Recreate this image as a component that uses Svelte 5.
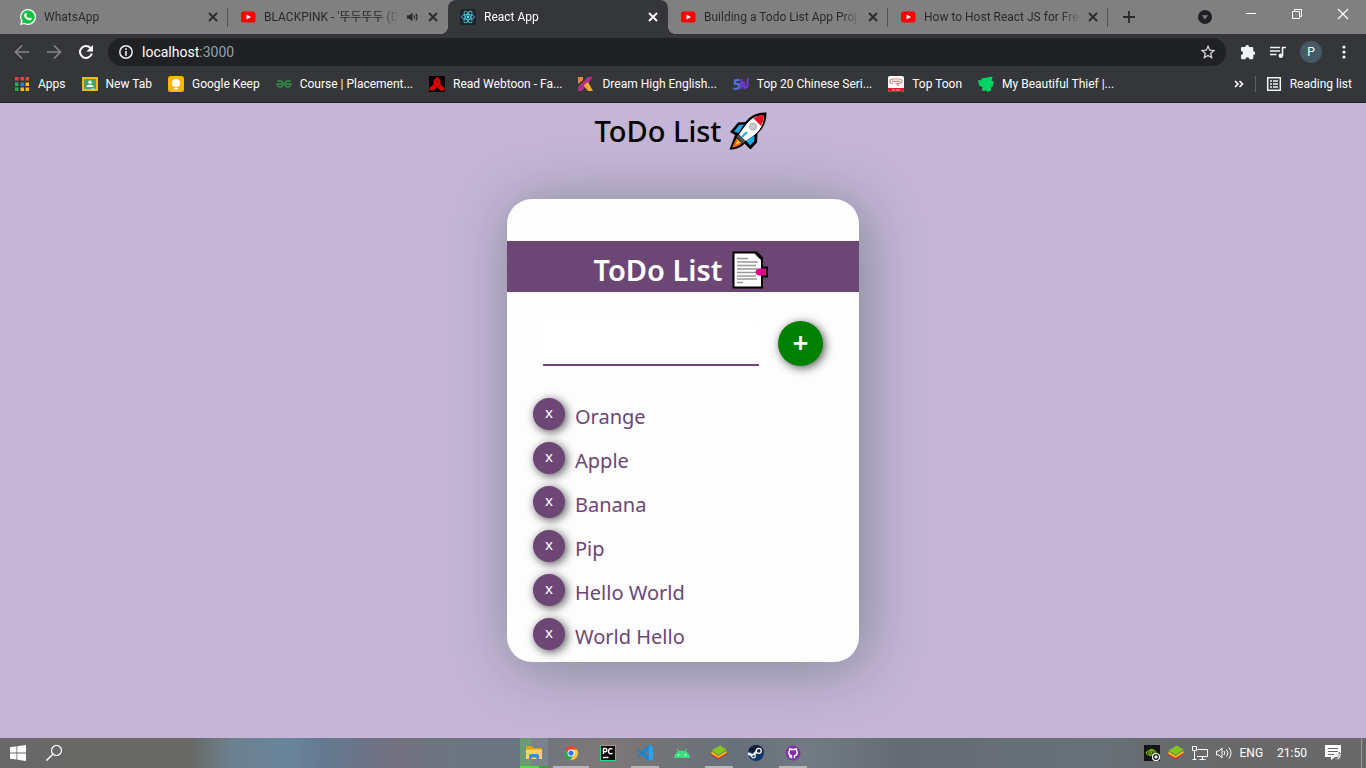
<script>
  let draft = $state('');
  let items = $state(['Orange', 'Apple', 'Banana', 'Pip', 'Hello World', 'World Hello']);

  const tabs = [
    { icon: 'whatsapp', title: 'WhatsApp' },
    { icon: 'youtube', title: "BLACKPINK - '뚜두뚜두 (D", sound: true },
    { icon: 'react', title: 'React App', active: true },
    { icon: 'youtube', title: 'Building a Todo List App Proj' },
    { icon: 'youtube', title: 'How to Host React JS for Free' }
  ];

  const bookmarks = [
    { icon: 'apps', title: 'Apps' },
    { icon: 'classroom', title: 'New Tab' },
    { icon: 'keep', title: 'Google Keep' },
    { icon: 'gfg', title: 'Course | Placement...' },
    { icon: 'webtoon', title: 'Read Webtoon - Fa...' },
    { icon: 'kiss', title: 'Dream High English...' },
    { icon: 'sw', title: 'Top 20 Chinese Seri...' },
    { icon: 'toon', title: 'Top Toon' },
    { icon: 'thief', title: 'My Beautiful Thief |...' }
  ];

  const tasks = [
    { icon: 'explorer', state: 'busy' },
    { icon: 'chrome', state: 'open wide' },
    { icon: 'pycharm', state: '' },
    { icon: 'vscode', state: 'open' },
    { icon: 'android', state: '' },
    { icon: 'stack', state: 'open' },
    { icon: 'steam', state: '' },
    { icon: 'github', state: 'open' }
  ];

  function add(event) {
    event.preventDefault();
    if (draft.trim()) items.push(draft.trim());
    draft = '';
  }
</script>

{#snippet icon(name)}
  <svg class="icon" viewBox="0 0 16 16" aria-hidden="true">
    {#if name === 'whatsapp'}
      <path d="M8 0a8 8 0 0 1 0 16 8 8 0 0 1-3.8-1L0 16l1.1-4.1A8 8 0 0 1 8 0z" fill="#fff" />
      <path d="M8 1.3a6.7 6.7 0 1 1-3.5 12.4l-2.6.7.7-2.5A6.7 6.7 0 0 1 8 1.3z" fill="#10c143" />
      <path d="M5.5 4.2c.6-.3.9 0 1.1.6l.4 1c.1.4-.6.8-.6 1 .4 1.1 1.3 2 2.6 2.5.3 0 .7-.9 1-.8l1.4.7c.6.3.3 1-.1 1.5-1 1-2.5.7-3.7.1-1.7-.8-3.3-2.5-3.6-4-.1-1 .6-2.1 1.5-2.6z" fill="#fff" />
    {:else if name === 'youtube'}
      <rect x="1" y="2.5" width="14.5" height="11" rx="2.5" fill="#f00" />
      <path d="M6.5 5.5v5L11 8z" fill="#fff" />
    {:else if name === 'react'}
      <rect width="16" height="16" rx="2" fill="#20232a" />
      <g fill="none" stroke="#53c1de" stroke-width=".9">
        <ellipse cx="8" cy="8" rx="6.5" ry="2.5" />
        <ellipse cx="8" cy="8" rx="6.5" ry="2.5" transform="rotate(60 8 8)" />
        <ellipse cx="8" cy="8" rx="6.5" ry="2.5" transform="rotate(120 8 8)" />
      </g>
      <circle cx="8" cy="8" r="1.4" fill="#61dafb" />
    {:else if name === 'apps'}
      <path d="M1 1h3.5v3.500H1zM6.500 1H10v3.500H6.500zM11.500 1H15v3.500h-3.500z" fill="#ea4335" />
      <path d="M1 6.500h3.500V10H1zM1 11.500h3.500V15H1z" fill="#34a853" />
      <path d="M6.500 6.500H10V10H6.500z" fill="#1a83f7" />
      <path d="M11.500 6.500H15V10h-3.500zM6.500 11.500H10V15H6.500zM11.500 11.500H15V15h-3.500z" fill="#fbbc05" />
    {:else if name === 'classroom'}
      <rect y="1" width="16" height="14" rx="1" fill="#f4b81c" />
      <rect x="2" y="3" width="12" height="10" fill="#4aa565" />
      <circle cx="8" cy="6.3" r="1.7" fill="#fff" />
      <path d="M4.500 11c0-3 7-3 7 0z" fill="#fff" />
      <path d="M9 12.500h4v1H9z" fill="#ddd" />
    {:else if name === 'keep'}
      <rect width="16" height="16" rx="2.5" fill="#fbb603" />
      <circle cx="8" cy="7" r="4" fill="#fff" />
      <path d="M6 10h4v1H6zM6 12h4v1.500H6z" fill="#fff" />
    {:else if name === 'gfg'}
      <g fill="none" stroke="#2f8d46" stroke-width="1.500">
        <path d="M.5 8h6.800M1.500 5.700C3.500 3.600 7.200 5 7.200 8s-4.500 4.300-5.900 1.500V8" />
        <path d="M15.500 8H8.700M14.500 5.700C12.500 3.600 8.800 5 8.800 8s4.500 4.300 5.900 1.500V8" />
      </g>
    {:else if name === 'webtoon'}
      <path d="M0 0h16v16H0z" fill="#080000" />
      <path d="M8 .5l3.500 4v4L15.500 12v2.500H11l-2-2.500H7l-2 2.500H.5V12l4-3.500v-4z" fill="#e00505" />
      <path d="M5 9l3 3 3-3M8 3v4" fill="none" stroke="#800" stroke-width=".7" />
    {:else if name === 'kiss'}
      <path d="M0 1h5v3L0 8z" fill="#e68a3c" />
      <path d="M10 1h5L4 15H0v-4z" fill="#b52d86" />
      <path d="M7 8l3-2 5 9h-5L6 10z" fill="#f0a733" />
    {:else if name === 'sw'}
      <g fill="none" stroke-width="2.200">
        <path d="M6.300 3.800 2 4.500l-.3 3.200 4.300.5-.5 4.200-5 .8" stroke="#4d72dc" />
        <path d="M8.200 3v9.500L11 5.500l.5 6.500 3-1.500.3-8.500" stroke="#6c38ca" />
      </g>
    {:else if name === 'toon'}
      <rect width="16" height="16" rx="2" fill="#fff" />
      <path d="M0 12h16v2a2 2 0 0 1-2 2H2a2 2 0 0 1-2-2z" fill="#e21b2c" />
      <path d="M5 7.500H4C1 7 1 3 5 3h6c4 0 4 4 0 4.500H8.500L11 10M4 5.300h8" fill="none" stroke="#d98088" stroke-width="1.200" />
      <path d="M4 14h3M8 14h4" stroke="#fff" stroke-width=".6" />
    {:else if name === 'thief'}
      <path d="M3.500 2.500 14.500.5l-.8 4.500 2.300.5-1.500 5.500-1.500.5v3l-3.500 1.500-1-1.500-4.500.5.500-4L1 9.500 0 4l3.500.5z" fill="#00d564" />
    {:else if name === 'explorer'}
      <path d="M0 1h6l1.500 2H15a1 1 0 0 1 1 1v3H0z" fill="#dda014" />
      <path d="M0 4.500h16V14H0z" fill="#ffd35c" />
      <path d="M3 15V11a2 2 0 0 1 2-2h6a2 2 0 0 1 2 2v4h-2.500v-2.500h-5V15z" fill="#2e90e0" />
    {:else if name === 'chrome'}
      <path d="M8 8 1.900 4.500A7 7 0 0 1 14.100 4.500z" fill="#e94335" />
      <path d="M1.900 4.500 5.300 10l3 1L7.500 15A7 7 0 0 1 1.900 4.500z" fill="#31a652" />
      <path d="M8 4.500h6.100A7 7 0 0 1 7.500 15L11 9.500z" fill="#fcc934" />
      <circle cx="8" cy="8" r="3.500" fill="#fff" />
      <circle cx="8" cy="8" r="2.600" fill="#2a75eb" />
    {:else if name === 'pycharm'}
      <path d="M0 0h16v16H0z" fill="#24d78d" />
      <path d="M1 1h14v14H1z" fill="#080808" />
      <path d="M3.500 9V3.500h1.800a1.500 1.500 0 0 1 0 3.200H4M12.500 4.300c-1.500-1.300-4-.8-4 1.900s2.500 3.300 4 1.800M3 12.500h5.500" fill="none" stroke="#fff" stroke-width="1.400" />
    {:else if name === 'vscode'}
      <path d="M11.500 0 16 2v12l-4.500 2L4.500 9.500 1.500 12 0 11l3.300-3L0 5l1.500-1 3 2.500zM11.800 4.500 7 8l4.800 3.500z" fill="#1686d5" />
      <path d="M11.800 0 16 2v12l-4.200 2z" fill="#29a3f0" />
    {:else if name === 'android'}
      <path d="M0 13a8 8 0 0 1 4-6.500L2.500 3.800l.8-.4 1.500 2.700a8.500 8.500 0 0 1 6.400 0l1.500-2.700.8.4L12 6.500A8 8 0 0 1 16 13z" fill="#3ddc84" />
      <circle cx="4.500" cy="10" r=".8" fill="#fff" />
      <circle cx="11.500" cy="10" r=".8" fill="#fff" />
    {:else if name === 'stack'}
      <path d="M.5 9l7 4.500L15.500 8v2L7.500 15l-7-4z" fill="#2a6fa8" />
      <path d="M.5 7.500 7.500 12l8-5v2.500l-8 5-7-4z" fill="#e23b2e" />
      <path d="M.5 6.500l7 4.500 8-5.300v2l-8 5-7-4z" fill="#fac80c" />
      <path d="M.5 5.500 9 .5l6.500 4-8 5.500z" fill="#82c51b" />
    {:else if name === 'steam'}
      <circle cx="8" cy="8" r="8" fill="#12386a" />
      <path d="M.3 6a8 8 0 0 1 15.400 0L12 9z" fill="#111c38" />
      <path d="M0 8.500l5 2.200 4-4.500" fill="none" stroke="#fff" stroke-width="2.600" />
      <circle cx="5.500" cy="11.200" r="2.300" fill="#fff" />
      <circle cx="5.500" cy="11.200" r="1.200" fill="#2b5787" />
      <circle cx="10.800" cy="5.800" r="2.500" fill="#12284c" stroke="#fff" stroke-width="1.300" />
    {:else if name === 'github'}
      <circle cx="8" cy="8" r="7.500" fill="#8231a8" />
      <path d="M6.500 13.200v-2.400C4.500 10.500 3.800 9.400 3.800 7.500c0-.8.3-1.400.8-1.900-.2-.7-.1-1.300.1-1.900.8 0 1.400.4 1.900.8h2.800c.5-.4 1.100-.8 1.900-.8.2.6.3 1.200.1 1.900.5.5.8 1.100.8 1.900 0 1.900-.7 3-2.700 3.300v2.400M6.500 12.200c-1 .2-1.700-.2-2.200-1" fill="none" stroke="#fff" stroke-width="1.400" />
    {:else if name === 'nvidia'}
      <path d="M0 0h16v16H0z" fill="#141414" />
      <path d="M2 8c2-3.500 6-3.500 8.500 0-2.500 3.500-6 3.500-8.500 0zM4.500 8c1-1.500 2.500-1.500 3.500 0-1 1.500-2.500 1.500-3.500 0zM6 4.500c3-.5 5 1 6.500 3.500" fill="none" stroke="#76b900" stroke-width="1.100" />
      <circle cx="12" cy="12" r="3.500" fill="#141414" stroke="#fff" stroke-width="1.200" />
      <path d="M12 10.300v3.400M10.300 12h3.400" stroke="#fff" stroke-width="1.400" />
    {:else if name === 'network'}
      <path d="M5.500 4.500h10v7H5M10.500 11.500V15M7.500 14.500h6M.5 1.500h4v4h-4zM2.500 5.500v9M.5 14.500h4" fill="none" stroke="#fff" />
    {:else if name === 'speaker'}
      <path d="M.5 6H3l3-3v10L3 10H.5z" fill="none" stroke="#fff" />
      <path d="M8 6q1.500 2 0 4M10.500 4.500q3 3.500 0 7M13 2.500q4 5.500 0 11" fill="none" stroke="#fff" />
    {:else if name === 'notice'}
      <path d="M0 0h16v12h-6l-4 3v-3H0z" fill="#fff" />
      <path d="M3 3.500h10M3 6.500h10M3 9.500h6" stroke="#666" />
      <path d="M14 7a4 4 0 1 1-4 7c3 0 5-3 4-7z" fill="#fff" stroke="#666" stroke-width=".8" />
    {:else if name === 'windows'}
      <path d="M0 2.200 6.500 1.300v6.200H0zM7.300 1.200 16 0v7.500H7.300zM0 8.400h6.500v6.200L0 13.700zM7.300 8.400H16V16l-8.700-1.200z" fill="#fff" />
    {:else if name === 'search'}
      <circle cx="10.500" cy="5.500" r="5" fill="none" stroke="#fff" stroke-width="1.200" />
      <path d="M6.800 9.200.4 15.600" stroke="#fff" stroke-width="1.400" />
    {:else if name === 'close'}
      <path d="M4 4l8 8M12 4l-8 8" stroke="currentColor" stroke-width="1.800" />
    {:else if name === 'sound'}
      <path d="M3 6.200h2.500L8.500 3.500v9L5.500 9.800H3z" fill="currentColor" />
      <path d="M10 6q1.300 2 0 4M12 4.500q2 3.500 0 7" fill="none" stroke="currentColor" stroke-width="1.200" />
    {:else if name === 'plus'}
      <path d="M8 2v12M2 8h12" stroke="currentColor" stroke-width="1.800" />
    {:else if name === 'down'}
      <circle cx="8" cy="8" r="7" fill="#202124" />
      <path d="M5 6.300h6L8 10.500z" fill="#808080" />
    {:else if name === 'minimise'}
      <path d="M3 7.500h10" stroke="#fff" />
    {:else if name === 'restore'}
      <path d="M3.500 5.500h7v7h-7zM5.500 5.500v-2h7v7h-2" fill="none" stroke="#fff" />
    {:else if name === 'exit'}
      <path d="M3 3l10 10M13 3 3 13" stroke="#fff" stroke-width="1.100" />
    {:else if name === 'back'}
      <path d="M15 8H2M8 1.500 1.500 8 8 14.500" fill="none" stroke="#85868a" stroke-width="1.700" />
    {:else if name === 'forward'}
      <path d="M1 8h13M8 1.500 14.500 8 8 14.500" fill="none" stroke="#85868a" stroke-width="1.700" />
    {:else if name === 'reload'}
      <path d="M13.800 9.500A6 6 0 1 1 12.500 4" fill="none" stroke="#fff" stroke-width="2" />
      <path d="M15 1v6.500H8.500z" fill="#fff" />
    {:else if name === 'info'}
      <circle cx="8" cy="8" r="6.200" fill="none" stroke="#eee" stroke-width="1.500" />
      <path d="M8 4.300v1.600M8 7v4.700" stroke="#eee" stroke-width="1.600" />
    {:else if name === 'star'}
      <path d="M8 2.300l1.700 3.900 4.200.4-3.200 2.800 1 4.200L8 11.400l-3.700 2.200 1-4.200-3.200-2.800 4.200-.4z" fill="none" stroke="#d5d6d8" stroke-width="1.300" />
    {:else if name === 'puzzle'}
      <path d="M5.300 3a1.900 1.900 0 0 1 3.800 0h3a1.200 1.200 0 0 1 1.200 1.200v3a1.900 1.900 0 0 1 0 3.800v3a1.200 1.200 0 0 1-1.200 1.200H9.400a2 2 0 0 0-4 0H2.200A1.200 1.200 0 0 1 1 14v-3a2 2 0 0 0 0-4V4.200A1.200 1.200 0 0 1 2.200 3z" fill="#f1f3f4" />
    {:else if name === 'media'}
      <path d="M0 3.500h10M0 7h10M0 10.500h6.500M12.500 12V3.500H16" fill="none" stroke="#f1f3f4" stroke-width="1.600" />
      <circle cx="10.800" cy="11.800" r="2.200" fill="#f1f3f4" />
    {:else if name === 'menu'}
      <circle cx="8" cy="3" r="1.600" fill="#f1f3f4" />
      <circle cx="8" cy="8" r="1.600" fill="#f1f3f4" />
      <circle cx="8" cy="13" r="1.600" fill="#f1f3f4" />
    {:else if name === 'more'}
      <path d="M4 5l3 3-3 3M8.500 5l3 3-3 3" fill="none" stroke="#fff" stroke-width="1.600" />
    {:else if name === 'reading'}
      <path d="M1.700 1.700h12.600v12.600H1.700z" fill="none" stroke="#f1f3f4" stroke-width="1.500" />
      <path d="M4 5h2M7 5h5M4 8h2M7 8h5M4 11h2M7 11h5" stroke="#f1f3f4" stroke-width="1.500" />
    {/if}
  </svg>
{/snippet}

<div class="screen">
  <header class="browser">
    <div class="strip">
      {#each tabs as tab}
        <div class="tab" class:active={tab.active}>
          {@render icon(tab.icon)}
          <span class="title">{tab.title}</span>
          {#if tab.sound}{@render icon('sound')}{/if}
          <button class="plain" aria-label="Close tab">{@render icon('close')}</button>
        </div>
      {/each}
      <button class="plain new" aria-label="New tab">{@render icon('plus')}</button>
      <div class="window">
        <button class="plain search-tabs" aria-label="Search tabs">{@render icon('down')}</button>
        <button class="plain" aria-label="Minimise">{@render icon('minimise')}</button>
        <button class="plain" aria-label="Restore">{@render icon('restore')}</button>
        <button class="plain" aria-label="Close">{@render icon('exit')}</button>
      </div>
    </div>

    <div class="toolbar">
      <div class="history">
        <button class="plain" aria-label="Back">{@render icon('back')}</button>
        <button class="plain" aria-label="Forward">{@render icon('forward')}</button>
        <button class="plain" aria-label="Reload">{@render icon('reload')}</button>
      </div>
      <div class="address">
        {@render icon('info')}
        <span class="url">localhost<span class="port">:3000</span></span>
        <button class="plain" aria-label="Bookmark">{@render icon('star')}</button>
      </div>
      <button class="plain" aria-label="Extensions">{@render icon('puzzle')}</button>
      <button class="plain" aria-label="Media">{@render icon('media')}</button>
      <button class="plain avatar">P</button>
      <button class="plain" aria-label="Menu">{@render icon('menu')}</button>
    </div>

    <nav class="bookmarks">
      {#each bookmarks as mark}
        <a href="#top">{@render icon(mark.icon)}{mark.title}</a>
      {/each}
      <button class="plain more" aria-label="More bookmarks">{@render icon('more')}</button>
      <button class="plain reading">{@render icon('reading')}Reading list</button>
    </nav>
  </header>

  <main>
    <h1>
      ToDo List
      <svg class="emoji" viewBox="0 0 38 38" aria-hidden="true">
        <path d="M37.500.5C29 .5 22 3 16.500 10L9 10.500 1 20l5 3L.5 37.500c6 0 12-2 15-6l6 6 6.500-7 .5-9C35 16 37.500 9 37.500.5z" fill="#000" />
        <path d="M10 13l5-.5L9.500 21 5 19.500zM25.500 23.500l-.5 6-4 4-4-5z" fill="#1fa9e8" />
        <path d="M35 3C27 3.500 21 7 16 14l-6 8.500 6.500 6.500 7.500-5c7-5 11-12 11-21z" fill="#fff" />
        <path d="M35 3c-4 .2-7.500 1.500-10.500 3.500l7.500 7.500c1.800-3.500 3-7 3-11z" fill="#e81224" />
        <path d="M9.500 22.500 7.500 25l6.500 6.500 2.500-2.500z" fill="#4c5257" />
        <path d="M7.500 26 3 35.500c4-.5 7-1.500 10-4.500z" fill="#f7630c" />
        <path d="M8.500 28 6.500 33l5-2.500z" fill="#ffc83d" />
        <circle cx="24" cy="14.500" r="3.500" fill="#ccc" stroke="#aaa" />
        <path d="M13 25l5-5" stroke="#1fa9e8" stroke-width="2" />
      </svg>
    </h1>

    <section class="card">
      <h2>
        ToDo List
        <svg class="emoji" viewBox="0 0 38 38" aria-hidden="true">
          <path d="M1.500.5H26l6 6v9h5v11h-5v11H1.500z" fill="#000" />
          <path d="M3.500 2.500h20L30 9v26.500H3.500z" fill="#fff" />
          <path d="M6 7.500h11M6 11h21M6 14.500h19M6 18h21M6 21.500h19M6 25h19M6 28h20M6 31.500h6" stroke="#999" stroke-width="1.500" />
          <path d="M35 17.500h-7q-3.500 1-3.500 3.500t3.500 3.500h7z" fill="#e3008c" />
        </svg>
      </h2>
      <form onsubmit={add}>
        <input type="text" aria-label="New item" bind:value={draft} />
        <button class="add" type="submit">+</button>
      </form>
      <ul>
        {#each items as item, i}
          <li>
            <button class="remove" aria-label="Remove {item}" onclick={() => items.splice(i, 1)}>x</button>
            <span>{item}</span>
          </li>
        {/each}
      </ul>
    </section>
  </main>

  <footer class="taskbar">
    <div class="start">
      <button class="plain" aria-label="Start">{@render icon('windows')}</button>
      <button class="plain" aria-label="Search">{@render icon('search')}</button>
    </div>
    <div class="tasks">
      {#each tasks as task}
        <button class="plain task {task.state}" aria-label={task.icon}>{@render icon(task.icon)}</button>
      {/each}
    </div>
    <div class="tray">
      {@render icon('nvidia')}
      {@render icon('stack')}
      {@render icon('network')}
      {@render icon('speaker')}
      <span>ENG</span>
      <span class="clock">21:50</span>
      {@render icon('notice')}
    </div>
  </footer>
</div>

<style>
  :global(body) {
    margin: 0;
  }

  .screen {
    display: flex;
    flex-direction: column;
    min-height: 100vh;
    font-family: Roboto, 'Noto Sans CJK KR', sans-serif;
    font-size: 12px;
    line-height: 16px;
    color: #fff;
  }

  .icon {
    display: block;
    flex: none;
    width: 16px;
    height: 16px;
  }

  .plain {
    display: flex;
    flex: none;
    align-items: center;
    padding: 0;
    border: 0;
    background: none;
    color: inherit;
    font: inherit;
  }

  .browser {
    background: #35363a;
    border-bottom: 1px solid #202124;
  }

  .strip {
    display: flex;
    height: 34px;
    padding-left: 8px;
    background: #808080;
    color: #292a2d;
  }

  .tab {
    display: flex;
    position: relative;
    flex: 0 1 220px;
    box-sizing: border-box;
    align-items: center;
    min-width: 0;
    padding: 0 7px 0 12px;
  }

  .tab:not(.active)::after {
    content: '';
    position: absolute;
    right: 0;
    top: 8px;
    width: 1px;
    height: 19px;
    background: #505154;
  }

  .tab:has(+ .active)::after {
    display: none;
  }

  .tab .title {
    flex: 1;
    overflow: hidden;
    margin: 0 4px 0 8px;
    white-space: nowrap;
    mask-image: linear-gradient(to left, transparent, #000 20px);
  }

  .tab .title + :global(.icon) {
    margin-right: 5px;
  }

  .active {
    border-radius: 8px 8px 0 0;
    background: #35363a;
    color: #fff;
  }

  .active::before,
  .active::after {
    content: '';
    position: absolute;
    bottom: 0;
    width: 8px;
    height: 8px;
  }

  .active::before {
    right: 100%;
    background: radial-gradient(circle at 0 0, transparent 8px, #35363a 8px);
  }

  .active::after {
    left: 100%;
    background: radial-gradient(circle at 100% 0, transparent 8px, #35363a 8px);
  }

  .new {
    margin-left: 13px;
  }

  .window {
    display: flex;
    gap: 30px;
    margin-left: auto;
    padding: 0 15px 6px 0;
  }

  .search-tabs {
    padding-top: 6px;
  }

  .toolbar {
    display: flex;
    align-items: center;
    gap: 14px;
    height: 36px;
    padding: 0 14px;
  }

  .history {
    display: flex;
    gap: 16px;
  }

  .address {
    display: flex;
    flex: 1;
    align-items: center;
    gap: 8px;
    height: 28px;
    box-sizing: border-box;
    padding: 0 10px;
    border-radius: 14px;
    background: #202124;
    font-size: 14px;
  }

  .url {
    flex: 1;
  }

  .port {
    color: #9aa0a6;
  }

  .avatar {
    justify-content: center;
    width: 22px;
    height: 22px;
    border-radius: 50%;
    background: #455a64;
  }

  .bookmarks {
    display: flex;
    align-items: center;
    gap: 16px;
    height: 28px;
    padding: 0 14px 4px;
    white-space: nowrap;
  }

  .bookmarks a,
  .reading {
    display: flex;
    align-items: center;
    gap: 8px;
    color: #fff;
    text-decoration: none;
  }

  .more {
    margin-left: auto;
  }

  .bookmarks .reading {
    margin-left: -8px;
    padding-left: 10px;
    border-left: 1px solid #5f6063;
  }

  main {
    display: flex;
    flex: 1;
    flex-direction: column;
    align-items: center;
    background: #c5b5d6;
    font-family: 'Noto Sans', sans-serif;
  }

  h1,
  h2 {
    display: flex;
    align-items: center;
    justify-content: center;
    gap: 8px;
    margin: 0;
    padding-right: 4px;
    font-size: 29px;
    line-height: 54px;
  }

  h1 {
    padding-top: 1px;
    margin-bottom: 41px;
    color: #000;
    font-weight: 500;
  }

  .emoji {
    width: 38px;
    height: 38px;
  }

  .card {
    box-sizing: border-box;
    width: 352px;
    max-width: 100%;
    padding: 42px 0 12px;
    border-radius: 25px;
    background: #fdfdfd;
    box-shadow: 5px 5px 60px #7c8793;
  }

  h2 {
    box-sizing: border-box;
    height: 51px;
    padding-top: 6px;
    background: #6c4675;
    font-weight: 600;
  }

  form {
    display: flex;
    gap: 19px;
    padding: 29px 36px 32px;
  }

  input {
    flex: 1;
    box-sizing: border-box;
    min-width: 0;
    height: 45px;
    padding: 0 8px;
    border: 0;
    border-bottom: 2px solid #6c4675;
    outline: 0;
    background: #fff;
    color: #6c4675;
    font: inherit;
    font-size: 20px;
  }

  .add,
  .remove {
    flex: none;
    padding: 0;
    border: 0;
    border-radius: 50%;
    color: #fff;
    font-family: inherit;
    box-shadow: 2px 2px 10px #555;
  }

  .add {
    width: 45px;
    height: 45px;
    padding-bottom: 4px;
    background: #008000;
    font-size: 28px;
    font-weight: 600;
    line-height: 40px;
  }

  .remove {
    width: 32px;
    height: 32px;
    padding-bottom: 4px;
    background: #6c4675;
    font-size: 15px;
    line-height: 28px;
  }

  ul {
    display: grid;
    gap: 12px;
    margin: 0;
    padding: 0 26px;
    list-style: none;
  }

  li {
    display: flex;
    gap: 10px;
    height: 32px;
    color: #6c4675;
    font-size: 20px;
    line-height: 38px;
  }

  .taskbar {
    display: flex;
    height: 30px;
    background: linear-gradient(
      to right,
      #686868 0,
      #686965 14%,
      #6d8190 17%,
      #69859c 21%,
      #647890 24%,
      #73707f 29%,
      #6c7580 33%,
      #6a7380 38%,
      #7e7878 44%,
      #747476 48%,
      #67707a 54%,
      #727b84 59%,
      #646b74 66%,
      #68717a 80%,
      #686c70 84%,
      #686868 90%
    );
  }

  .start {
    display: flex;
    box-sizing: border-box;
    gap: 20px;
    width: 38%;
    padding-left: 10px;
  }

  .tasks {
    display: flex;
    gap: 9px;
    padding-left: 1px;
  }

  .task {
    position: relative;
    justify-content: center;
    width: 28px;
  }

  .open::after,
  .busy::after {
    content: '';
    position: absolute;
    right: 0;
    bottom: 0;
    left: 0;
    height: 2px;
    background: #b5b5b5;
  }

  .wide::after {
    right: -4px;
    left: -4px;
  }

  .busy {
    background: linear-gradient(to right, #6c9b73 11px, #7a828c 11px);
  }

  .busy::after {
    background: linear-gradient(to right, #4be337 19px, #35a82b 19px);
  }

  .tray {
    display: flex;
    align-items: center;
    gap: 8px;
    margin: 0 4px 0 auto;
    padding-right: 20px;
    border-right: 1px solid #999;
  }

  .clock {
    padding: 0 10px 0 6px;
  }
</style>
